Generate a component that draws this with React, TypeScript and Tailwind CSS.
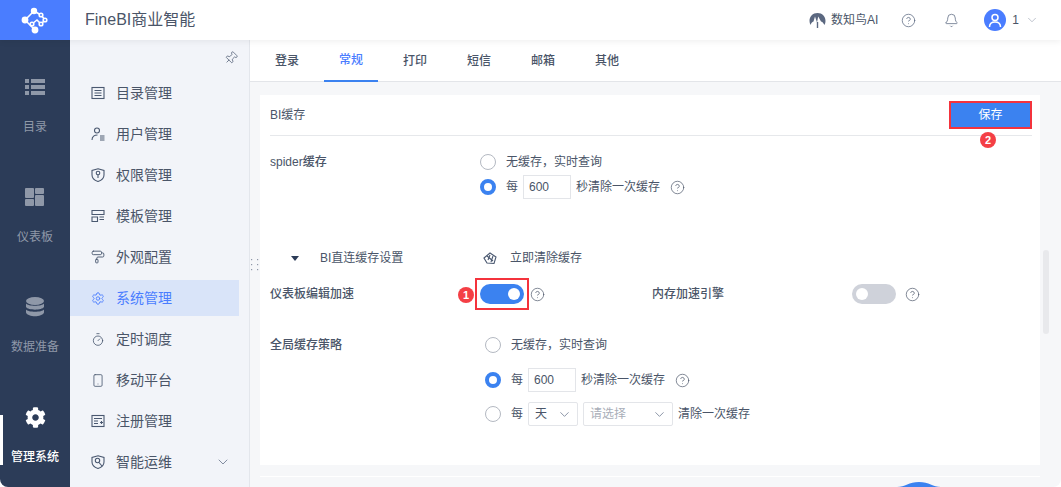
import { Bell, ChevronDown, CircleHelp, PaintRoller, Pin, Settings, Smartphone, Timer } from 'lucide-react';
import { FaCog } from 'react-icons/fa';
import type { ReactNode } from 'react';

function Logo() {
  return (
    <svg width="28" height="28" viewBox="0 0 28 28" fill="none" stroke="white" strokeWidth="1.6">
      <path d="M4 14 L13 5 M4 14 L14 24 M13 5 L20 9 M20 9 L24 14 L20 18 L16 14 L11 18" />
      <circle cx="4" cy="14" r="2.6" fill="white" />
      <circle cx="13" cy="5" r="2.4" fill="white" />
      <circle cx="14" cy="24" r="2.6" fill="white" />
      <circle cx="20" cy="9" r="1.8" fill="#4a7dff" />
      <circle cx="24" cy="14" r="1.8" fill="#4a7dff" />
      <circle cx="20" cy="18" r="1.8" fill="#4a7dff" />
      <circle cx="11" cy="18" r="1.8" fill="#4a7dff" />
    </svg>
  );
}

function RailList() {
  return (
    <svg width="20" height="16" viewBox="0 0 20 16" fill="#8f98a8">
      <rect x="0" y="0" width="4" height="4" />
      <rect x="6" y="0" width="14" height="4" />
      <rect x="0" y="6" width="4" height="4" />
      <rect x="6" y="6" width="14" height="4" />
      <rect x="0" y="12" width="4" height="4" />
      <rect x="6" y="12" width="14" height="4" />
    </svg>
  );
}

function RailBoard() {
  return (
    <svg width="20" height="18" viewBox="0 0 20 18" fill="#8f98a8">
      <rect x="0" y="0" width="9" height="10" rx="1" />
      <rect x="10" y="0" width="9" height="6" rx="1" />
      <rect x="0" y="11" width="9" height="7" rx="1" />
      <rect x="10" y="7" width="9" height="11" rx="1" />
    </svg>
  );
}

function RailData() {
  return (
    <svg width="20" height="20" viewBox="0 0 20 20" fill="#8f98a8">
      <ellipse cx="10" cy="4" rx="9" ry="4" />
      <path d="M1 6.5 C3 9.5 17 9.5 19 6.5 V10 C17 13.5 3 13.5 1 10 Z" />
      <path d="M1 12.5 C3 15.5 17 15.5 19 12.5 V15.5 C17 20.5 3 20.5 1 15.5 Z" />
    </svg>
  );
}

const stroke = { fill: 'none', stroke: '#4a5870', strokeWidth: 1.1 };

function MenuIcon({ name }: { name: string }) {
  if (name === 'list')
    return (
      <svg width="14" height="14" viewBox="0 0 14 14" {...stroke}>
        <rect x="1" y="1.5" width="12" height="11" />
        <path d="M3.5 4.5H10.5M3.5 7H10.5M3.5 9.5H10.5" />
      </svg>
    );
  if (name === 'user')
    return (
      <svg width="14" height="14" viewBox="0 0 14 14" {...stroke}>
        <circle cx="6" cy="3.5" r="2.5" />
        <path d="M1 13C1 9.5 3.5 8 6.5 8M9 9H13.5M9 11H13.5M9 13H13.5" />
      </svg>
    );
  if (name === 'shield')
    return (
      <svg width="14" height="14" viewBox="0 0 14 14" {...stroke}>
        <path d="M7 .8L13 2.5V7C13 10.5 10 12.5 7 13.5C4 12.5 1 10.5 1 7V2.5Z" />
        <circle cx="7" cy="5" r="1.8" />
        <path d="M7 6.8V10" />
      </svg>
    );
  if (name === 'template')
    return (
      <svg width="14" height="14" viewBox="0 0 14 14" {...stroke}>
        <path d="M1 1.5H13V5.5H1ZM1 8H6.5V12.5H1ZM8.5 8H13M8.5 10.5H13M1 8" />
      </svg>
    );
  if (name === 'form')
    return (
      <svg width="14" height="14" viewBox="0 0 14 14" {...stroke}>
        <rect x="1" y="1.5" width="12" height="11" />
        <path d="M3 4.5H11M3 7H7M3 9.5H7M9 8.5H12M10.5 7V10" />
      </svg>
    );
  if (name === 'ops')
    return (
      <svg width="14" height="14" viewBox="0 0 14 14" {...stroke}>
        <path d="M7 .8L13 2.5V7C13 10.5 10 12.5 7 13.5C4 12.5 1 10.5 1 7V2.5Z" />
        <circle cx="6.5" cy="5.5" r="2.2" />
        <path d="M8 7.5L11 11" />
      </svg>
    );
  const cls = 'text-[#4a5870]';
  if (name === 'roller') return <PaintRoller size={14} strokeWidth={1.6} className={cls} />;
  if (name === 'gear') return <Settings size={15} strokeWidth={1.5} className="text-[#4a7dff]" />;
  if (name === 'timer') return <Timer size={15} strokeWidth={1.4} className={cls} />;
  return <Smartphone size={15} strokeWidth={1.4} className={cls} />;
}

function RailItem({ icon, label, active }: { icon: ReactNode; label: string; active?: boolean }) {
  return (
    <div className="relative flex h-[110px] flex-col items-center pt-[23px]">
      {active && <div className="absolute left-0 top-[33px] h-[50px] w-[3px] bg-white" />}
      <div className="flex h-[24px] items-center justify-center">{icon}</div>
      <div className={`mt-[20px] text-[12px] leading-[16px] ${active ? 'text-white font-medium' : 'text-[#8f98a8]'}`}>{label}</div>
    </div>
  );
}

function MenuItem({ icon, label, active, more }: { icon: string; label: string; active?: boolean; more?: boolean }) {
  return (
    <div className={`mb-[5px] flex h-[36px] w-[169px] items-center pl-[21px] text-[14px] ${active ? 'bg-[#d9e4f9] text-[#4a7dff]' : 'text-[#4a5568]'}`}>
      <div className="flex w-[14px] items-center justify-center">
        <MenuIcon name={icon} />
      </div>
      <span className="ml-[11px]">{label}</span>
      {more && <ChevronDown size={16} strokeWidth={1.2} className="ml-[43px] text-[#66728a]" />}
    </div>
  );
}

function Help({ className }: { className?: string }) {
  return <CircleHelp size={15} strokeWidth={1.1} className={`text-[#4a5568] ${className ?? ''}`} />;
}

function Radio({ on }: { on?: boolean }) {
  return on ? (
    <div className="h-[16px] w-[16px] rounded-full border-[4.5px] border-[#3b82f0] bg-white" />
  ) : (
    <div className="h-[16px] w-[16px] rounded-full border border-[#b4b9c2] bg-white" />
  );
}

function NumberBox() {
  return <div className="flex h-[24px] w-[48px] items-center border border-[#e3e5e9] pl-[5px] text-[12px] text-[#4a5568]">600</div>;
}

function Select({ text, width, placeholder }: { text: string; width: string; placeholder?: boolean }) {
  return (
    <div className={`flex h-[24px] items-center justify-between rounded-[2px] border border-[#e3e5e9] pl-[6px] pr-[5px] text-[12px] ${width} ${placeholder ? 'text-[#a9aeb8]' : 'text-[#4a5568]'}`}>
      <span>{text}</span>
      <ChevronDown size={15} strokeWidth={1.2} className="text-[#66728a]" />
    </div>
  );
}

export default function App() {
  return (
    <div className="relative flex h-[487px] w-[1061px] flex-col overflow-hidden rounded-b-[8px] bg-[#f6f7f9] font-['Liberation_Sans','Noto_Sans_CJK_SC',sans-serif] text-[#4a5568]">
      <header className="relative z-10 flex h-[40px] shrink-0 items-center bg-white shadow-[0_2px_6px_rgba(0,0,0,0.06)]">
        <div className="flex h-[40px] w-[70px] items-center justify-center bg-[#4a7dff]">
          <Logo />
        </div>
        <div className="ml-[15px] text-[16px] text-[#4a5568]">FineBI商业智能</div>
        <div className="ml-auto flex items-center pr-[22px]">
          <svg width="17" height="15" viewBox="0 0 17 15" fill="#5b6880">
            <path d="M8.5 0C3.8 0 .5 3.5.5 8c0 1.5.4 2.8 1 4 .7-2 1.5-3 3-3.5L6 3.5 8 9.5l1.2-6 2.8 5c2 .5 2.6 2 3.5 3.5.7-1.2 1-2.5 1-4 0-4.5-3.3-8-8-8z" />
            <rect x="7.8" y="9" width="1.4" height="6" />
          </svg>
          <span className="ml-[5px] text-[12px]">数知鸟AI</span>
          <CircleHelp size={15} strokeWidth={1.2} className="ml-[23px] text-[#5b6880]" />
          <Bell size={15} strokeWidth={1.2} className="ml-[28px] text-[#5b6880]" />
          <div className="ml-[25px] flex h-[22px] w-[22px] items-center justify-center rounded-full bg-[#4a7dff]">
            <svg width="14" height="15" viewBox="0 0 14 15" fill="none" stroke="white" strokeWidth="1.5">
              <circle cx="7" cy="4.5" r="3" />
              <path d="M1.5 14C1.5 10.5 4 9 7 9S12.5 10.5 12.5 14" />
            </svg>
          </div>
          <span className="ml-[6px] text-[12px]">1</span>
          <ChevronDown size={14} strokeWidth={1} className="ml-[6px] text-[#8f98a8]" />
        </div>
      </header>

      <div className="flex min-h-0 flex-1">
        <nav className="w-[70px] shrink-0 bg-[#2c3c58] pt-[12px]">
          <RailItem icon={<RailList />} label="目录" />
          <RailItem icon={<RailBoard />} label="仪表板" />
          <RailItem icon={<RailData />} label="数据准备" />
          <RailItem icon={<FaCog size={21} color="white" />} label="管理系统" active />
        </nav>

        <aside className="w-[180px] shrink-0 border-r border-[#e3e6ec] bg-[#f2f4f9]">
          <div className="flex h-[35px] items-center justify-end pr-[11px]">
            <Pin size={14} strokeWidth={1.2} className="rotate-45 text-[#4a5870]" />
          </div>
          <MenuItem icon="list" label="目录管理" />
          <MenuItem icon="user" label="用户管理" />
          <MenuItem icon="shield" label="权限管理" />
          <MenuItem icon="template" label="模板管理" />
          <MenuItem icon="roller" label="外观配置" />
          <MenuItem icon="gear" label="系统管理" active />
          <MenuItem icon="timer" label="定时调度" />
          <MenuItem icon="phone" label="移动平台" />
          <MenuItem icon="form" label="注册管理" />
          <MenuItem icon="ops" label="智能运维" more />
        </aside>

        <main className="relative min-w-0 flex-1">
          <div className="flex h-[42px] gap-[10px] border-b border-[#e3e5e9] bg-white pl-[10px] text-[12px] font-medium">
            <div className="flex h-[41px] items-center px-[15px]">登录</div>
            <div className="flex h-[42px] items-center border-b-2 border-[#3b82f0] px-[15px] text-[#4a7dff]">常规</div>
            <div className="flex h-[41px] items-center px-[15px]">打印</div>
            <div className="flex h-[41px] items-center px-[15px]">短信</div>
            <div className="flex h-[41px] items-center px-[15px]">邮箱</div>
            <div className="flex h-[41px] items-center px-[15px]">其他</div>
          </div>

          <div className="pl-[10px] pt-[13px]">
            <section className="h-[370px] w-[780px] bg-white px-[10px] text-[12px]">
              <div className="flex h-[41px] w-[762px] items-center justify-between border-b border-[#e6e8eb]">
                <span>BI缓存</span>
                <div className="relative">
                  <button className="flex h-[28px] w-[83px] items-center justify-center border-2 border-[#f4333c] bg-[#3b82f0] text-[12px] text-white">保存</button>
                  <div className="absolute left-[31px] top-[31px] flex h-[16px] w-[16px] items-center justify-center rounded-full bg-[#f43f45] text-[11px] font-bold text-white">2</div>
                </div>
              </div>

              <div className="mt-[14px] flex h-[24px] items-center">
                <div className="w-[210px] font-medium">spider缓存</div>
                <Radio />
                <span className="ml-[10px]">无缓存，实时查询</span>
              </div>
              <div className="mt-px flex h-[24px] items-center pl-[210px]">
                <Radio on />
                <span className="ml-[10px]">每</span>
                <div className="ml-[5px]"><NumberBox /></div>
                <span className="ml-[5px]">秒清除一次缓存</span>
                <Help className="ml-[10px]" />
              </div>

              <div className="mt-[47px] flex h-[24px] items-center">
                <div className="flex w-[210px] items-center pl-[21px]">
                  <div className="h-0 w-0 border-x-[4px] border-t-[5px] border-x-transparent border-t-[#2c3c58]" />
                  <span className="ml-[21px]">BI直连缓存设置</span>
                </div>
                <svg className="ml-[3px]" width="14" height="14" viewBox="0 0 14 14" fill="none" stroke="#4a5870" strokeWidth="1.1">
                  <path d="M1 7L7 2L13 6L11 12.5L4 12Z" />
                  <path d="M4 5L10 10M7 4L5 9M10 5L8 11" />
                </svg>
                <span className="ml-[13px]">立即清除缓存</span>
              </div>

              <div className="mt-[12px] flex h-[24px] items-center">
                <div className="w-[210px] font-medium">仪表板编辑加速</div>
                <div className="relative h-[20px] w-[44px] rounded-full bg-[#3b82f0]">
                  <div className="absolute right-[4px] top-[4px] h-[12px] w-[12px] rounded-full bg-white" />
                  <div className="absolute -inset-x-[5px] -inset-y-[6px] border-2 border-[#f4333c]" />
                  <div className="absolute -left-[22px] top-[3px] flex h-[16px] w-[16px] items-center justify-center rounded-full bg-[#f43f45] text-[11px] font-bold text-white">1</div>
                </div>
                <Help className="ml-[6px]" />
                <div className="ml-[107px] w-[200px] font-medium">内存加速引擎</div>
                <div className="relative h-[20px] w-[44px] rounded-full bg-[#cfd2da]">
                  <div className="absolute left-[4px] top-[4px] h-[12px] w-[12px] rounded-full bg-white" />
                </div>
                <Help className="ml-[9px]" />
              </div>

              <div className="mt-[27px] flex h-[24px] items-center">
                <div className="w-[215px] font-medium">全局缓存策略</div>
                <Radio />
                <span className="ml-[10px]">无缓存，实时查询</span>
              </div>
              <div className="mt-[11px] flex h-[24px] items-center pl-[215px]">
                <Radio on />
                <span className="ml-[10px]">每</span>
                <div className="ml-[5px]"><NumberBox /></div>
                <span className="ml-[5px]">秒清除一次缓存</span>
                <Help className="ml-[10px]" />
              </div>
              <div className="mt-[10px] flex h-[24px] items-center pl-[215px]">
                <Radio />
                <span className="ml-[10px]">每</span>
                <div className="ml-[5px]"><Select text="天" width="w-[50px]" /></div>
                <div className="ml-[5px]"><Select text="请选择" width="w-[90px]" placeholder /></div>
                <span className="ml-[5px]">清除一次缓存</span>
              </div>
            </section>
            <div className="mt-[11px] h-px w-[780px] bg-white" />
          </div>

          <svg className="absolute left-0 top-[218px]" width="10" height="14" viewBox="0 0 10 14" fill="#8f98a8">
            <rect x="1" y="1" width="1.2" height="1.2" />
            <rect x="7" y="1" width="1.2" height="1.2" />
            <rect x="1" y="6" width="1.2" height="1.2" />
            <rect x="7" y="6" width="1.2" height="1.2" />
            <rect x="1" y="11" width="1.2" height="1.2" />
            <rect x="7" y="11" width="1.2" height="1.2" />
          </svg>
          <div className="absolute left-[793px] top-[210px] h-[84px] w-[6px] rounded-full bg-[#e8e9ec]" />
          <svg className="absolute left-[647px] top-[442px]" width="44" height="5" viewBox="0 0 44 5" fill="#3b82f0">
            <path d="M0 5C8 5 12 0 22 0S36 5 44 5Z" />
          </svg>
        </main>
      </div>
    </div>
  );
}
